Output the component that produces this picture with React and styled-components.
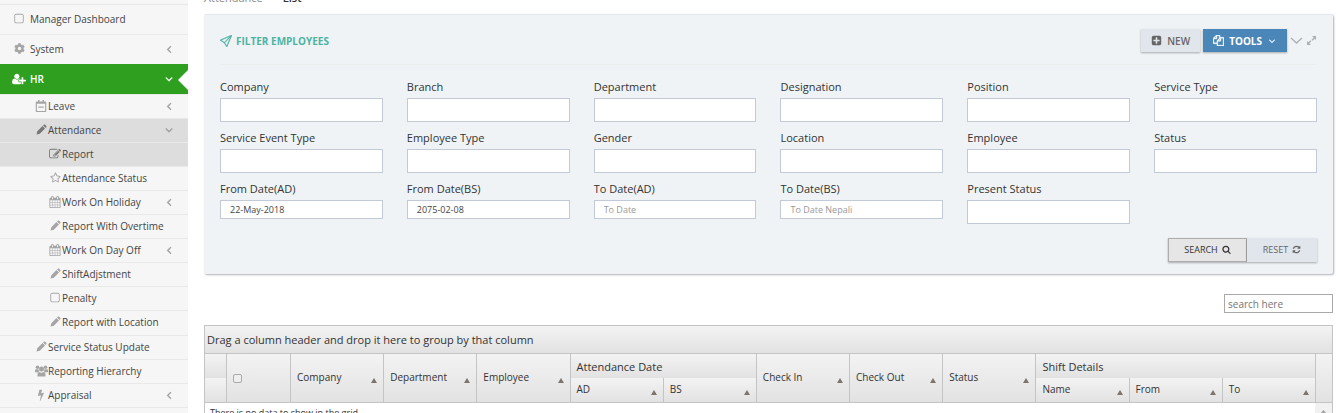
import React from 'react';
import styled, { createGlobalStyle } from 'styled-components';
import { FaCog, FaRegCalendarMinus, FaRegStar } from 'react-icons/fa';
import { SlPaperPlane } from 'react-icons/sl';

const GlobalStyle = createGlobalStyle`
  *, *::before, *::after { box-sizing: border-box; }
  body { margin: 0; background: #fff; color: #333; font-family: "Open Sans", "Liberation Sans", sans-serif; font-size: 11px; }
  button, input, select { font-family: inherit; }
`;

const glyphs = {
  square: 'M1312 256h-832q-66 0-113 47t-47 113v832q0 66 47 113t113 47h832q66 0 113-47t47-113v-832q0-66-47-113t-113-47zm288 160v832q0 119-84.5 203.5t-203.5 84.5h-832q-119 0-203.5-84.5t-84.5-203.5v-832q0-119 84.5-203.5t203.5-84.5h832q119 0 203.5 84.5t84.5 203.5z',
  edit: 'M888 1184l116-116-152-152-116 116v56h96v96h56zm440-720q-16-16-33 1l-350 350q-17 17-1 33t33-1l350-350q17-17 1-33zm80 594v190q0 119-84.5 203.5t-203.5 84.5h-832q-119 0-203.5-84.5t-84.5-203.5v-832q0-119 84.5-203.5t203.5-84.5h832q63 0 117 25 15 7 18 23 3 17-9 29l-49 49q-14 14-32 8-23-6-45-6h-832q-66 0-113 47t-47 113v832q0 66 47 113t113 47h832q66 0 113-47t47-113v-126q0-13 9-22l64-64q15-15 35-7t20 29zm-96-738l288 288-672 672h-288v-288zm444 132l-92 92-288-288 92-92q28-28 68-28t68 28l152 152q28 28 28 68t-28 68z',
  calendar: 'M192 1664h288v-288h-288v288zm352 0h320v-288h-320v288zm-352-352h288v-320h-288v320zm352 0h320v-320h-320v320zm-352-384h288v-288h-288v288zm736 736h320v-288h-320v288zm-384-736h320v-288h-320v288zm768 736h288v-288h-288v288zm-384-352h320v-320h-320v320zm-352-864v-288q0-13-9.5-22.5t-22.5-9.5h-64q-13 0-22.5 9.5t-9.5 22.5v288q0 13 9.5 22.5t22.5 9.5h64q13 0 22.5-9.5t9.5-22.5zm736 864h288v-320h-288v320zm-384-384h320v-288h-320v288zm384 0h288v-288h-288v288zm32-480v-288q0-13-9.5-22.5t-22.5-9.5h-64q-13 0-22.5 9.5t-9.5 22.5v288q0 13 9.5 22.5t22.5 9.5h64q13 0 22.5-9.5t9.5-22.5zm384-64v1280q0 52-38 90t-90 38h-1408q-52 0-90-38t-38-90v-1280q0-52 38-90t90-38h128v-96q0-66 47-113t113-47h64q66 0 113 47t47 113v96h384v-96q0-66 47-113t113-47h64q66 0 113 47t47 113v96h128q52 0 90 38t38 90z',
  left: 'M1203 544q0 13-10 23l-393 393 393 393q10 10 10 23t-10 23l-50 50q-10 10-23 10t-23-10l-466-466q-10-10-10-23t10-23l466-466q10-10 23-10t23 10l50 50q10 10 10 23z',
  down: 'M1395 736q0 13-10 23l-466 466q-10 10-23 10t-23-10l-466-466q-10-10-10-23t10-23l50-50q10-10 23-10t23 10l393 393 393-393q10-10 23-10t23 10l50 50q10 10 10 23z',
  plus: 'M1408 960v-128q0-26-19-45t-45-19h-320v-320q0-26-19-45t-45-19h-128q-26 0-45 19t-19 45v320h-320q-26 0-45 19t-19 45v128q0 26 19 45t45 19h320v320q0 26 19 45t45 19h128q26 0 45-19t19-45v-320h320q26 0 45-19t19-45zm256-544v960q0 119-84.5 203.5t-203.5 84.5h-960q-119 0-203.5-84.5t-84.5-203.5v-960q0-119 84.5-203.5t203.5-84.5h960q119 0 203.5 84.5t84.5 203.5z',
  refresh: 'M1639 1056q0 5-1 7-64 268-268 434.5t-478 166.5q-146 0-282.5-55t-243.5-157l-129 129q-19 19-45 19t-45-19-19-45v-448q0-26 19-45t45-19h448q26 0 45 19t19 45-19 45l-137 137q71 66 161 102t187 36q134 0 250-65t186-179q11-17 53-117 8-23 30-23h192q13 0 22.5 9.5t9.5 22.5zm25-800v448q0 26-19 45t-45 19h-448q-26 0-45-19t-19-45 19-45l138-138q-148-137-349-137-134 0-250 65t-186 179q-11 17-53 117-8 23-30 23h-199q-13 0-22.5-9.5t-9.5-22.5v-7q65-268 270-434.5t480-166.5q146 0 284 55.5t245 156.5l130-129q19-19 45-19t45 19 19 45z',
  search: 'M1216 832q0-185-131.5-316.5t-316.5-131.5-316.5 131.5-131.5 316.5 131.5 316.5 316.5 131.5 316.5-131.5 131.5-316.5zm512 832q0 52-38 90t-90 38q-54 0-90-38l-343-342q-179 124-399 124-143 0-273.5-55.5t-225-150-150-225-55.5-273.5 55.5-273.5 150-225 225-150 273.5-55.5 273.5 55.5 225 150 150 225 55.5 273.5q0 220-124 399l343 343q37 37 37 90z',
  userPlus: 'M704 896q-159 0-271.5-112.5t-112.5-271.5 112.5-271.5 271.5-112.5 271.5 112.5 112.5 271.5-112.5 271.5-271.5 112.5zm960 128h352q13 0 22.5 9.5t9.5 22.5v192q0 13-9.5 22.5t-22.5 9.5h-352v352q0 13-9.5 22.5t-22.5 9.5h-192q-13 0-22.5-9.5t-9.5-22.5v-352h-352q-13 0-22.5-9.5t-9.5-22.5v-192q0-13 9.5-22.5t22.5-9.5h352v-352q0-13 9.5-22.5t22.5-9.5h192q13 0 22.5 9.5t9.5 22.5v352zm-736 224q0 52 38 90t90 38h256v238q-68 50-171 50h-874q-121 0-194-69t-73-190q0-53 3.5-103.5t14-109 26.5-108.5 43-97.5 62-81 85.5-53.5 111.5-20q19 0 39 17 79 61 154.5 91.5t164.5 30.5 164.5-30.5 154.5-91.5q20-17 39-17 132 0 217 96h-223q-52 0-90 38t-38 90v192z',
  bolt: 'M1333 566q18 20 7 44l-540 1157q-13 25-42 25-4 0-14-2-17-5-25.5-19t-4.5-30l197-808-406 101q-4 1-12 1-18 0-31-11-18-15-13-39l201-825q4-14 16-23t28-9h328q19 0 32 12.5t13 29.5q0 8-5 18l-171 463 396-98q8-2 12-2 19 0 34 15z',
  copy: 'M1696 384q40 0 68 28t28 68v1216q0 40-28 68t-68 28h-960q-40 0-68-28t-28-68v-288h-544q-40 0-68-28t-28-68v-672q0-40 20-88t48-76l408-408q28-28 76-48t88-20h416q40 0 68 28t28 68v328q68-40 128-40h416zm-544 213l-299 299h299v-299zm-640-384l-299 299h299v-299zm196 647l316-316v-416h-384v416q0 40-28 68t-68 28h-416v640h512v-256q0-40 20-88t48-76zm956 804v-1152h-384v416q0 40-28 68t-68 28h-416v640h896z',
};

function Glyph({ name, size = 12, wide = false, bold = false }) {
  return (
    <svg
      width={wide ? size + 2 : size}
      height={size}
      viewBox={wide ? '0 0 2048 1792' : '0 0 1792 1792'}
      fill="currentColor"
      stroke={bold ? 'currentColor' : 'none'}
      strokeWidth="70"
      aria-hidden="true"
    >
      <path d={glyphs[name]} />
    </svg>
  );
}

function Pencil() {
  return (
    <svg width="11" height="11" viewBox="0 0 11 11" fill="currentColor" aria-hidden="true">
      <path d="M.5 10.500l.8-3.300 5.200-5.200 2.500 2.500-5.200 5.200zM7.100 1.400l.8-.8q.5-.4 1 0l1.500 1.500q.4.500 0 1l-.8.8z" />
    </svg>
  );
}

function People() {
  return (
    <svg width="13" height="12" viewBox="0 0 13 12" fill="currentColor" aria-hidden="true">
      <circle cx="2.500" cy="2.300" r="1.800" />
      <circle cx="10.500" cy="2.300" r="1.800" />
      <circle cx="6.500" cy="3.900" r="2.500" />
      <path d="M0 7.200V5.500q0-1.300 1-1.300h2.400q.1 1.500 1 2.300-1 0-1.500.7zM13 7.200V5.500q0-1.300-1-1.300H9.600q-.1 1.500-1 2.300 1 0 1.500.7zM2.500 11.500V9.300q0-2.300 1.700-2.300 1 .8 2.300.8T8.800 7q1.700 0 1.700 2.300v2.200z" />
    </svg>
  );
}

const Shell = styled.div`
  display: flex;
  height: 100vh;
  overflow: hidden;
`;

const Sidebar = styled.nav`
  flex: 0 0 188px;
  background: #f6f6f6;
  padding-top: 4px;
`;

const MenuList = styled.ul`
  list-style: none;
  margin: 0;
  padding: 0;
  padding-bottom: ${p => (p.$level === 3 ? '1px' : '0')};
  border-bottom: ${p => (p.$level === 2 ? '1px solid #e9e9e9' : '0')};
`;

const indents = { 1: '13px', 2: '35px', 3: '49px' };

const MenuLink = styled.a`
  position: relative;
  display: flex;
  align-items: center;
  height: ${p => (p.$level === 1 ? '30px' : '24px')};
  padding: 0 13px 2px ${p => indents[p.$level]};
  border-top: 1px solid ${p => (p.$tone === 'active' ? '#2e9f1f' : '#e9e9e9')};
  background: ${p => ({ active: '#2e9f1f', open: '#dddddd' }[p.$tone] || 'transparent')};
  color: ${p => (p.$tone === 'active' ? '#fff' : '#444')};
  font-size: 10px;
  font-weight: ${p => (p.$tone === 'active' ? 600 : 400)};
  line-height: 14px;
  text-decoration: none;
  white-space: nowrap;
`;

const MenuIcon = styled.span`
  display: flex;
  justify-content: center;
  flex: none;
  width: 12px;
  margin-right: ${p => (p.$level === 1 ? '5px' : '1px')};
  color: ${p => ({ active: '#fff', open: '#777' }[p.$tone] || '#a5a5a5')};
  svg { flex: none; }
`;

const MenuText = styled.span`
  flex: 1;
`;

const Caret = styled.span`
  display: flex;
  color: ${p => (p.$tone === 'active' ? '#fff' : '#999')};
`;

const Notch = styled.span`
  position: absolute;
  right: 0;
  top: 5px;
  border: 10px solid transparent;
  border-left-width: 0;
  border-right-color: #fff;
`;

const Main = styled.main`
  flex: 1;
  min-width: 0;
  padding: 0 5px 0 16px;
`;

const Breadcrumb = styled.div`
  display: flex;
  gap: 20px;
  height: 24px;
  margin-top: -10px;
  font-size: 11px;
  line-height: 16px;
  color: #888;
  strong { color: #333; font-weight: 600; }
`;

const Panel = styled.section`
  padding: 12px 16px;
  border-top: 1px solid #e2e8ed;
  border-radius: 2px;
  background: #eff3f6;
  box-shadow: 1px 1px 2px #aeb2b5;
`;

const PanelHead = styled.header`
  display: flex;
  align-items: center;
  justify-content: space-between;
  height: 38px;
  padding-bottom: 10px;
  border-bottom: 1px solid #eceded;
`;

const Title = styled.h2`
  display: flex;
  align-items: center;
  gap: 4px;
  margin: 0;
  color: #4db3a2;
  font-size: 10px;
  font-weight: 700;
  line-height: 16px;
`;

const Actions = styled.div`
  display: flex;
  align-items: center;
  gap: 3px;
`;

const ActionButton = styled.button`
  display: flex;
  align-items: center;
  justify-content: center;
  gap: 5px;
  height: 23px;
  padding: 0 10px;
  border: 0;
  background: ${p => (p.$primary ? '#4b86b9' : '#e1e5ec')};
  color: ${p => (p.$primary ? '#fff' : '#666')};
  font-size: 10px;
  font-weight: ${p => (p.$primary ? 700 : 600)};
  box-shadow: 0 1px 2px rgba(0, 0, 0, 0.3);
`;

const IconButton = styled.button`
  display: flex;
  padding: 0;
  border: 0;
  background: none;
  color: #aab0b4;
`;

const Fields = styled.div`
  display: grid;
  grid-template-columns: repeat(6, 1fr);
  gap: 7px 24px;
  padding-top: 13px;
`;

const Field = styled.label`
  display: flex;
  flex-direction: column;
  font-size: 11px;
  line-height: 18px;
`;

const Select = styled.select`
  appearance: none;
  width: 100%;
  height: 24px;
  margin: 2px 0 0;
  border: 1px solid #c2cad8;
  border-radius: 0;
  background: #fff;
`;

const DateInput = styled.input`
  width: 100%;
  height: 19px;
  margin: 2px 0 0;
  padding: 0 9px;
  border: 1px solid #c2cad8;
  background: #fff;
  color: #444;
  font-size: 9px;
  &::placeholder { color: #999; opacity: 1; }
`;

const FormActions = styled.div`
  display: flex;
  justify-content: flex-end;
  margin-top: 14px;
`;

const FormButton = styled.button`
  display: flex;
  align-items: center;
  justify-content: center;
  gap: 4px;
  width: ${p => (p.$focused ? '79px' : '70px')};
  height: 24px;
  padding: 0 0 2px;
  border: ${p => (p.$focused ? '1px solid #adadad' : '0')};
  background: ${p => (p.$focused ? '#e6e6e6' : '#e1e5ec')};
  color: ${p => (p.$focused ? '#333' : '#666')};
  font-size: 9px;
  box-shadow: 0 1px 2px rgba(0, 0, 0, 0.3);
`;

const SearchRow = styled.div`
  display: flex;
  justify-content: flex-end;
  padding: 20px 0 12px;
`;

const SearchInput = styled.input`
  width: 109px;
  height: 19px;
  padding: 0 3px;
  border: 1px solid #a9a9a9;
  font-size: 10px;
  &::placeholder { color: #757575; opacity: 1; }
`;

const Grid = styled.div`
  border: 1px solid #c4c4c4;
`;

const GroupBar = styled.div`
  height: 27px;
  padding: 0 2px;
  background: linear-gradient(#f3f3f3, #e2e2e2);
  font-size: 11px;
  line-height: 28px;
  color: #333;
`;

const Table = styled.table`
  width: 100%;
  table-layout: fixed;
  border-collapse: separate;
  border-spacing: 0;
  border-top: 1px solid #c4c4c4;
`;

const Head = styled.th`
  height: ${p => (p.rowSpan === 2 ? '48px' : '24px')};
  padding: ${p => (p.$group ? '2px 6px 0' : '0 6px 2px')};
  border-left: ${p => (p.$first ? '0' : '1px solid #c4c4c4')};
  background: linear-gradient(#f3f3f3, #e2e2e2);
  color: #333;
  font-size: ${p => (p.$group ? '11px' : '10px')};
  font-weight: 400;
  line-height: 16px;
  text-align: left;
  white-space: nowrap;
`;

const HeadContent = styled.span`
  display: flex;
  align-items: center;
  justify-content: space-between;
`;

const SortMark = styled.span`
  border: 3px solid transparent;
  border-top-width: 0;
  border-bottom: 5px solid #7d746d;
  margin-top: 6px;
`;

const CheckBox = styled.input`
  appearance: none;
  display: block;
  width: 9px;
  height: 9px;
  margin: 2px 0 0;
  border: 1px solid #aaa;
  border-radius: 2px;
  background: #eee;
`;

const Empty = styled.td`
  height: 40px;
  padding: 4px 5px;
  border-top: 1px solid #c4c4c4;
  font-size: 9px;
  line-height: 12px;
  vertical-align: top;
`;

const ScrollCell = styled.td`
  padding: 7px 0 0 5px;
  border-top: 1px solid #c4c4c4;
  background: #f1f1f1;
  vertical-align: top;
  color: #a3a3a3;
  svg { display: block; }
`;

const menu = [
  { text: 'Manager Dashboard', icon: <Glyph name="square" /> },
  { text: 'System', icon: <FaCog size={11} />, caret: 'left' },
  {
    text: 'HR', icon: <Glyph name="userPlus" wide />, caret: 'down', tone: 'active', notch: true,
    items: [
      { text: 'Leave', icon: <FaRegCalendarMinus size={12} />, caret: 'left' },
      {
        text: 'Attendance', icon: <Pencil />, caret: 'down', tone: 'open',
        items: [
          { text: 'Report', icon: <Glyph name="edit" />, tone: 'open' },
          { text: 'Attendance Status', icon: <FaRegStar size={11} /> },
          { text: 'Work On Holiday', icon: <Glyph name="calendar" />, caret: 'left' },
          { text: 'Report With Overtime', icon: <Pencil /> },
          { text: 'Work On Day Off', icon: <Glyph name="calendar" />, caret: 'left' },
          { text: 'ShiftAdjstment', icon: <Pencil /> },
          { text: 'Penalty', icon: <Glyph name="square" /> },
          { text: 'Report with Location', icon: <Pencil /> },
        ],
      },
      { text: 'Service Status Update', icon: <Pencil /> },
      { text: 'Reporting Hierarchy', icon: <People /> },
      { text: 'Appraisal', icon: <Glyph name="bolt" />, caret: 'left' },
    ],
  },
];

function Menu({ items, level = 1 }) {
  return (
    <MenuList $level={level}>
      {items.map(item => (
        <li key={item.text}>
          <MenuLink href="#" $level={level} $tone={item.tone}>
            <MenuIcon $level={level} $tone={item.tone}>{item.icon}</MenuIcon>
            <MenuText>{item.text}</MenuText>
            {item.caret && <Caret $tone={item.tone}><Glyph name={item.caret} bold /></Caret>}
            {item.notch && <Notch />}
          </MenuLink>
          {item.items && <Menu items={item.items} level={level + 1} />}
        </li>
      ))}
    </MenuList>
  );
}

const fields = [
  'Company', 'Branch', 'Department', 'Designation', 'Position', 'Service Type',
  'Service Event Type', 'Employee Type', 'Gender', 'Location', 'Employee', 'Status',
];

const dates = [
  { label: 'From Date(AD)', value: '22-May-2018' },
  { label: 'From Date(BS)', value: '2075-02-08' },
  { label: 'To Date(AD)', placeholder: 'To Date' },
  { label: 'To Date(BS)', placeholder: 'To Date Nepali' },
];

function SelectField({ label }) {
  return (
    <Field>
      {label}
      <Select><option value="" /></Select>
    </Field>
  );
}

function SortHead({ children, ...rest }) {
  return (
    <Head {...rest}>
      <HeadContent>{children}<SortMark /></HeadContent>
    </Head>
  );
}

export default function App() {
  return (
    <Shell>
      <GlobalStyle />
      <Sidebar><Menu items={menu} /></Sidebar>
      <Main>
        <Breadcrumb><span>Attendance</span><strong>List</strong></Breadcrumb>
        <Panel>
          <PanelHead>
            <Title><SlPaperPlane size={12} strokeWidth="30" stroke="currentColor" />FILTER EMPLOYEES</Title>
            <Actions>
              <ActionButton><Glyph name="plus" size={11} />NEW</ActionButton>
              <ActionButton $primary><Glyph name="copy" size={11} bold />TOOLS<Glyph name="down" size={10} bold /></ActionButton>
              <IconButton aria-label="Collapse">
                <svg width="13" height="12" viewBox="0 0 13 12" fill="none" stroke="currentColor" strokeWidth="1.3"><path d="M1 3l5.500 5 5.500-5" /></svg>
              </IconButton>
              <IconButton aria-label="Full screen">
                <svg width="11" height="11" viewBox="0 0 11 11" fill="currentColor"><path d="M6 1h4v4L8.700 3.700 6.600 5.800l-1-1 2.100-2.100zM5 10H1V6l1.300 1.300 2.100-2.100 1 1-2.100 2.100z" /></svg>
              </IconButton>
            </Actions>
          </PanelHead>
          <Fields>
            {fields.map(label => <SelectField key={label} label={label} />)}
            {dates.map(d => (
              <Field key={d.label}>
                {d.label}
                <DateInput type="text" defaultValue={d.value} placeholder={d.placeholder} />
              </Field>
            ))}
            <SelectField label="Present Status" />
          </Fields>
          <FormActions>
            <FormButton $focused>SEARCH <Glyph name="search" size={9} /></FormButton>
            <FormButton>RESET <Glyph name="refresh" size={9} /></FormButton>
          </FormActions>
        </Panel>
        <SearchRow><SearchInput type="text" placeholder="search here" aria-label="search here" /></SearchRow>
        <Grid>
          <GroupBar>Drag a column header and drop it here to group by that column</GroupBar>
          <Table>
            <colgroup>
              <col style={{ width: 21 }} />
              <col style={{ width: 64 }} />
              {Array.from({ length: 11 }, (_, i) => <col key={i} />)}
              <col style={{ width: 17 }} />
            </colgroup>
            <thead>
              <tr>
                <Head $first />
                <Head rowSpan={2}><CheckBox type="checkbox" aria-label="Select all" /></Head>
                <SortHead rowSpan={2}>Company</SortHead>
                <SortHead rowSpan={2}>Department</SortHead>
                <SortHead rowSpan={2}>Employee</SortHead>
                <Head colSpan={2} $group>Attendance Date</Head>
                <SortHead rowSpan={2}>Check In</SortHead>
                <SortHead rowSpan={2}>Check Out</SortHead>
                <SortHead rowSpan={2}>Status</SortHead>
                <Head colSpan={3} $group>Shift Details</Head>
                <Head rowSpan={2} />
              </tr>
              <tr>
                <Head $first />
                <SortHead>AD</SortHead>
                <SortHead>BS</SortHead>
                <SortHead>Name</SortHead>
                <SortHead>From</SortHead>
                <SortHead>To</SortHead>
              </tr>
            </thead>
            <tbody>
              <tr>
                <Empty colSpan={13}>There is no data to show in the grid</Empty>
                <ScrollCell><svg width="7" height="4" viewBox="0 0 7 4" fill="currentColor"><path d="M0 4l3.500-4L7 4z" /></svg></ScrollCell>
              </tr>
            </tbody>
          </Table>
        </Grid>
      </Main>
    </Shell>
  );
}
